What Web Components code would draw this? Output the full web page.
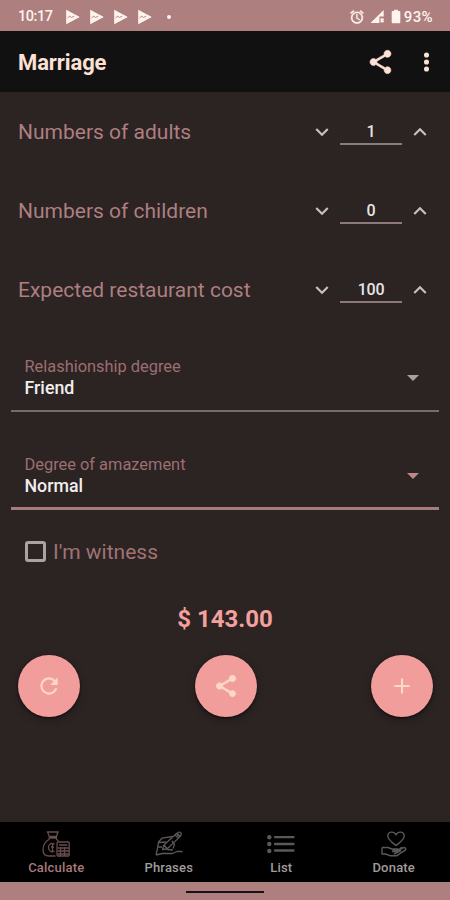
<!DOCTYPE html>
<html lang="en">
<head>
<meta charset="utf-8">
<title>Marriage</title>
<style>
    html, body { margin: 0; height: 100%; background: #2c2323; }
    body { font-family: Roboto, "Liberation Sans", sans-serif; overflow: hidden; }
</style>
</head>
<body>
<gift-app></gift-app>

<script>
const ICONS = {
    share: `<svg viewBox="0 0 24 24" fill="currentColor"><path d="M18 16.08c-.76 0-1.44.3-1.96.77L8.91 12.7c.05-.23.09-.46.09-.7s-.04-.47-.09-.7l7.05-4.11c.54.5 1.25.81 2.04.81 1.66 0 3-1.34 3-3s-1.34-3-3-3-3 1.34-3 3c0 .24.04.47.09.7L8.04 9.81C7.5 9.31 6.79 9 6 9c-1.66 0-3 1.34-3 3s1.34 3 3 3c.79 0 1.5-.31 2.04-.81l7.12 4.16c-.05.21-.08.43-.08.65 0 1.61 1.31 2.92 2.92 2.92s2.92-1.31 2.92-2.92-1.31-2.92-2.92-2.92z" stroke="currentColor" stroke-width=".5"/></svg>`,
    more: `<svg viewBox="0 0 24 24" fill="currentColor"><circle cx="12" cy="5.6" r="2.35"/><circle cx="12" cy="12" r="2.35"/><circle cx="12" cy="18.4" r="2.35"/></svg>`,
    refresh: `<svg viewBox="0 0 24 24" fill="currentColor"><path d="M17.65 6.35A7.96 7.96 0 0 0 12 4a8 8 0 1 0 7.73 10h-2.08A6 6 0 1 1 12 6c1.66 0 3.14.69 4.22 1.78L13 11h7V4z"/></svg>`,
    plus: `<svg viewBox="0 0 24 24" fill="currentColor"><path d="M19 13h-6v6h-2v-6H5v-2h6V5h2v6h6z"/></svg>`,
    down: `<svg viewBox="0 0 24 24" fill="currentColor"><path d="M7.41 8.59 12 13.17l4.59-4.58L18 10l-6 6-6-6z"/></svg>`,
    up: `<svg viewBox="0 0 24 24" fill="currentColor"><path d="M7.41 15.41 12 10.83l4.59 4.58L18 14l-6-6-6 6z"/></svg>`,
    play: `<svg viewBox="0 0 14 16" fill="currentColor"><path d="M0.2 0.8 13.8 8 0.2 15.2z"/><path d="M1.6 8.8l2.2-1.6 1.8 1.3 2.6-1.5" fill="none" stroke="#ad7f7f" stroke-width=".9"/></svg>`,
    alarm: `<svg viewBox="0 0 24 24" fill="currentColor"><path d="M22 5.72l-4.6-3.86-1.29 1.53 4.6 3.86zM7.88 3.39 6.6 1.86 2 5.71l1.29 1.53zM12.5 8H11v6l4.75 2.85.75-1.23-4-2.37zM12 4a9 9 0 1 0 0 18 9 9 0 0 0 0-18zm0 16a7 7 0 1 1 0-14 7 7 0 0 1 0 14z" stroke="currentColor" stroke-width=".6"/></svg>`,
    signal: `<svg viewBox="0 0 16 16" fill="currentColor"><path d="M0.5 15 14.6 1v7H10V15z"/><path d="M11.4 10.2l3 3.800M14.4 10.2l-3 3.800" stroke="currentColor" stroke-width="1.800"/></svg>`,
    battery: `<svg viewBox="0 0 10 16" fill="currentColor"><path d="M3 0.8h4v1.4h1.6q1 0 1 1v11q0 1-1 1H1.4q-1 0-1-1v-11q0-1 1-1H3z"/></svg>`,
    calculate: `<svg viewBox="0 0 28 26" fill="none" stroke="currentColor" stroke-width="1.3">
        <path d="M5.5 1h10.5l-1.6 4.5h-7zM6.5 7h8.5M7.5 8C3.5 10.5 1 14 1 18.5c0 4.5 2.5 6.5 6 6.5h6.5M14 8l2.500 2"/>
        <path d="M12.5 13.2c-2.6-2-6-.4-6 3.3s3.2 5.2 6 3.5M10.5 12.5v9M9 16h3"/>
        <rect x="15" y="11" width="12.2" height="14" rx="1"/><path d="M17 14h8.4M15.5 17h11.5M15.5 20h11.5M15.5 23h11.5M18.5 16v9M22.5 16v9" />
    </svg>`,
    phrases: `<svg viewBox="0 0 28 26" fill="none" stroke="currentColor" stroke-width="1.3" stroke-linejoin="round">
        <path d="M7.5 18.5l1.4-4.5L21.8 2.2l3.5 3.2L12 18zM20 4l3.3 3M9 14l3 3.5"/><circle cx="24.3" cy="3" r="1.9"/>
        <path d="M17.5 5.5 7 7.2 3.5 11l-1 6.5L1 24M4 11.5l7-.5M3.2 16H7M17 10l2.5 3.5-1.5 4M1 24l6-1.5h10.5l4.500-2h5.500M12 18.5l6 .5"/>
    </svg>`,
    list: `<svg viewBox="0 0 28 26" stroke="currentColor" fill="currentColor" stroke-linecap="round"><g stroke="none"><circle cx="2.3" cy="6.2" r="2.2"/><circle cx="2.3" cy="13" r="2.2"/><circle cx="2.3" cy="20" r="2.2"/></g><path d="M8 6.2h18.500M8 13h18.5M8 19.500h18.5" stroke-width="2.3"/></svg>`,
    donate: `<svg viewBox="0 0 28 26" fill="none" stroke="currentColor" stroke-width="1.4" stroke-linejoin="round">
        <path d="M16 14.5C12 11.5 7.8 8.5 7.8 5c0-4.6 6-5.2 8.2-1.2C18.2-.2 24.2.4 24.2 5c0 3.5-4.2 6.5-8.2 9.5z"/>
        <path d="M2 16.5v6.5h3.5l5 1.8h6l9-6c1-1.8-1-2.800-2.5-2l-4.5 2.700h-6M2 16.5h6l4 1.5h5.500c1.5 0 1.5 2.5 0 2.5H12M19 18.5l3-2.5M14 23l7-3.500"/>
    </svg>`,
};

class AppIcon extends HTMLElement {
    connectedCallback() {
        this.attachShadow({mode: 'open'});
        this.shadowRoot.innerHTML = `
            <style>
                :host { display: block; flex: none; width: 24px; height: 24px; }
                svg { display: block; width: 100%; height: 100%; overflow: visible; }
            </style>
            ${ICONS[this.getAttribute('name')]}
        `;
    }
}
customElements.define('app-icon', AppIcon);

class StatusBar extends HTMLElement {
    connectedCallback() {
        this.attachShadow({mode: 'open'});
        this.shadowRoot.innerHTML = `
            <style>
                :host {
                    display: flex; align-items: center; flex: none; box-sizing: border-box;
                    height: 31px; padding: 2px 17px 0 18px;
                    background: #ad7f7f; color: #fff3ee;
                    font-size: 14.5px; font-weight: 500;
                }
                .time { width: 48px; letter-spacing: -.45px; }
                .plays { display: flex; gap: 10px; flex: 1; align-items: center; }
                .plays app-icon { width: 14px; height: 16px; }
                .dot { width: 4px; height: 4px; border-radius: 50%; background: currentColor; margin-left: 5px; }
                .alarm { width: 16px; height: 16px; margin-right: 5px; }
                .signal { width: 15px; height: 15px; margin-right: 6px; }
                .battery { width: 10px; height: 15px; margin-right: 3px; }
                .level { font-size: 15px; letter-spacing: .4px; }
            </style>
            <span class="time">10:17</span>
            <div class="plays">
                <app-icon name="play"></app-icon><app-icon name="play"></app-icon>
                <app-icon name="play"></app-icon><app-icon name="play"></app-icon>
                <span class="dot"></span>
            </div>
            <app-icon class="alarm" name="alarm"></app-icon>
            <app-icon class="signal" name="signal"></app-icon>
            <app-icon class="battery" name="battery"></app-icon>
            <span class="level">93%</span>
        `;
    }
}
customElements.define('status-bar', StatusBar);

class TopBar extends HTMLElement {
    connectedCallback() {
        this.attachShadow({mode: 'open'});
        this.shadowRoot.innerHTML = `
            <style>
                :host {
                    display: flex; align-items: center; flex: none; box-sizing: border-box;
                    height: 61px; padding: 1px 9px 0 18px;
                    background: #111; color: #fde0d6;
                }
                .title { flex: 1; font-size: 22px; font-weight: 700; letter-spacing: -.1px; }
                .share { width: 29px; height: 28px; margin-right: 17px; }
                .more { width: 29px; height: 26px; }
            </style>
            <span class="title"><slot></slot></span>
            <app-icon class="share" name="share"></app-icon>
            <app-icon class="more" name="more"></app-icon>
        `;
    }
}
customElements.define('top-bar', TopBar);

class NumberRow extends HTMLElement {
    connectedCallback() {
        this.attachShadow({mode: 'open'});
        this.shadowRoot.innerHTML = `
            <style>
                :host {
                    display: flex; align-items: center; height: 79px;
                    padding: 0 17px 0 18px; color: #ad7f80;
                }
                .label { flex: 1; font-size: 21px; padding-top: 1px; }
                app-icon { width: 26px; height: 26px; color: #c9c0c0; }
                .value {
                    box-sizing: border-box; width: 62px; height: 26px; margin: 0 5px;
                    border-bottom: 2px solid #8d7a7b;
                    color: #e8e4e4; font-size: 16px; font-weight: 500; letter-spacing: -.3px;
                    line-height: 25px; text-align: center;
                }
            </style>
            <span class="label"><slot></slot></span>
            <app-icon name="down"></app-icon>
            <span class="value">${this.getAttribute('value')}</span>
            <app-icon name="up"></app-icon>
        `;
    }
}
customElements.define('number-row', NumberRow);

class SelectField extends HTMLElement {
    connectedCallback() {
        this.attachShadow({mode: 'open'});
        this.shadowRoot.innerHTML = `
            <style>
                :host {
                    display: flex; align-items: center; box-sizing: border-box;
                    height: 56px; margin: 0 11px; padding: 0 20px 11px 13.5px;
                    border-bottom: 2px solid #796b6c; color: #a99fa0;
                }
                :host([focused]) { height: 57px; padding-bottom: 9px; border-bottom: 3px solid #a57b7b; color: #bd8889; }
                .text { flex: 1; display: flex; flex-direction: column; }
                .label { color: #9c6f71; font-size: 16.4px; line-height: 20px; }
                .value { color: #f1eeee; font-size: 17.8px; line-height: 21px; font-weight: 500; }
                .arrow { border: 6px solid transparent; border-top-color: currentColor; border-bottom: 0; margin-top: 1px; }
            </style>
            <div class="text">
                <span class="label"><slot></slot></span>
                <span class="value">${this.getAttribute('value')}</span>
            </div>
            <span class="arrow"></span>
        `;
    }
}
customElements.define('select-field', SelectField);

class CheckOption extends HTMLElement {
    connectedCallback() {
        this.attachShadow({mode: 'open'});
        this.shadowRoot.innerHTML = `
            <style>
                :host { display: flex; align-items: center; gap: 7px; height: 24px; padding-left: 25px; color: #a17375; font-size: 21px; }
                .box { box-sizing: border-box; width: 21px; height: 21px; margin-bottom: 2px; border: 3px solid #aaa3a3; border-radius: 3px; }
            </style>
            <span class="box"></span>
            <span><slot></slot></span>
        `;
    }
}
customElements.define('check-option', CheckOption);

class RoundButton extends HTMLElement {
    connectedCallback() {
        this.attachShadow({mode: 'open'});
        this.shadowRoot.innerHTML = `
            <style>
                :host {
                    display: flex; align-items: center; justify-content: center;
                    width: 62px; height: 62px; border-radius: 50%;
                    background: #f09d9b; color: #fdd9c5;
                    box-shadow: 0 1px 2px #120c0c, 0 3px 8px rgba(0, 0, 0, .25);
                }
                app-icon { width: 26px; height: 26px; }
            </style>
            <app-icon name="${this.getAttribute('icon')}"></app-icon>
        `;
    }
}
customElements.define('round-button', RoundButton);

class NavTab extends HTMLElement {
    connectedCallback() {
        this.attachShadow({mode: 'open'});
        this.shadowRoot.innerHTML = `
            <style>
                :host {
                    display: flex; flex-direction: column; align-items: center; flex: 1;
                    color: #a09c9c; font-size: 13px; font-weight: 500; letter-spacing: .2px;
                }
                :host([active]) { color: #a97a7b; }
                app-icon { width: 28px; height: 26px; margin: 9px 0 3px; color: #5c5858; }
                :host([active]) app-icon { color: #694c4d; }
                .label { line-height: 16px; }
            </style>
            <app-icon name="${this.getAttribute('icon')}"></app-icon>
            <span class="label"><slot></slot></span>
        `;
    }
}
customElements.define('nav-tab', NavTab);

class GiftApp extends HTMLElement {
    connectedCallback() {
        this.attachShadow({mode: 'open'});
        this.shadowRoot.innerHTML = `
            <style>
                :host { display: flex; flex-direction: column; width: 450px; height: 900px; background: #2c2323; }
                main { flex: 1; }
                .selects { display: flex; flex-direction: column; gap: 41px; padding-top: 27px; }
                check-option { margin-top: 30px; }
                .total { margin-top: 40px; line-height: 30px; text-align: center; color: #f4a09e; font-size: 24px; font-weight: 700; }
                .actions { display: flex; justify-content: space-between; padding: 0 17px 0 18px; margin-top: 21px; }
                nav { display: flex; height: 60px; background: #000; }
                .system { display: flex; height: 18px; background: #ad7f7f; align-items: center; justify-content: center; }
                .handle { width: 78px; height: 2px; background: #1c1012; margin-top: 2px; }
            </style>
            <status-bar></status-bar>
            <top-bar>Marriage</top-bar>
            <main>
                <number-row value="1">Numbers of adults</number-row>
                <number-row value="0">Numbers of children</number-row>
                <number-row value="100">Expected restaurant cost</number-row>
                <div class="selects">
                    <select-field value="Friend">Relashionship degree</select-field>
                    <select-field value="Normal" focused>Degree of amazement</select-field>
                </div>
                <check-option>I'm witness</check-option>
                <div class="total">$ 143.00</div>
                <div class="actions">
                    <round-button icon="refresh"></round-button>
                    <round-button icon="share"></round-button>
                    <round-button icon="plus"></round-button>
                </div>
            </main>
            <nav>
                <nav-tab icon="calculate" active>Calculate</nav-tab>
                <nav-tab icon="phrases">Phrases</nav-tab>
                <nav-tab icon="list">List</nav-tab>
                <nav-tab icon="donate">Donate</nav-tab>
            </nav>
            <div class="system"><span class="handle"></span></div>
        `;
    }
}
customElements.define('gift-app', GiftApp);
</script>
</body>
</html>
